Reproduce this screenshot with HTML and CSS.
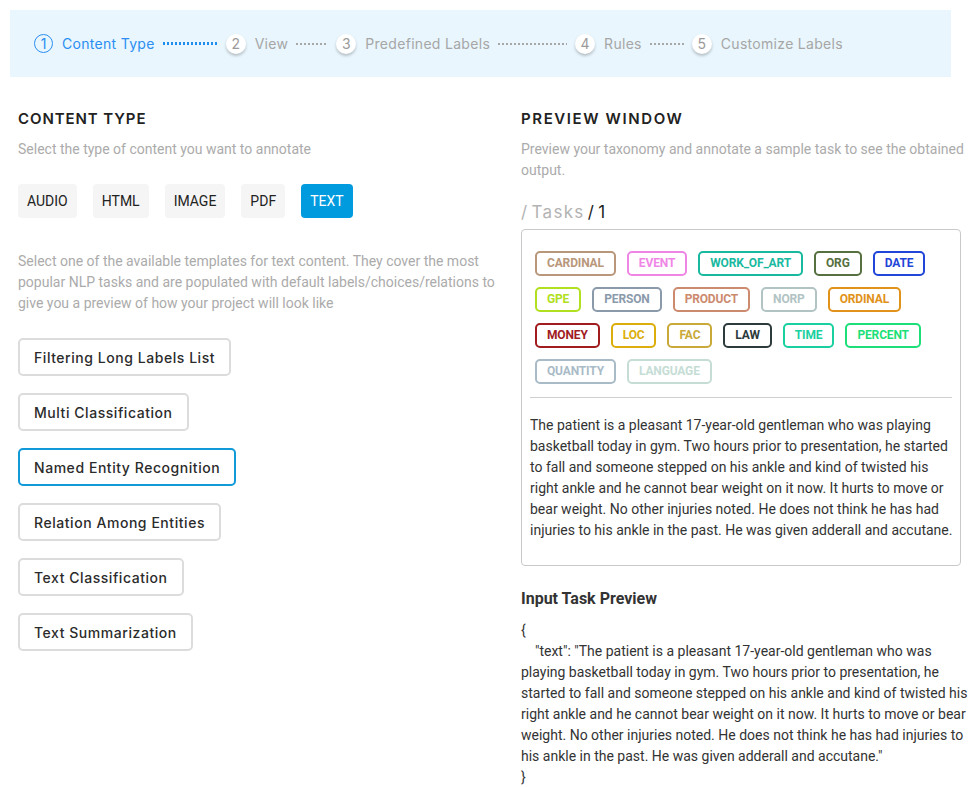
FILE: index.html
```html
<!DOCTYPE html>
<html lang="en">
<head>
<meta charset="utf-8">
<title>Project setup</title>
<link rel="stylesheet" href="styles.css">
</head>
<body>
<nav class="stepper">
  <div class="step active"><span class="num">1</span><span class="label">Content Type</span></div>
  <span class="dots dots-active w55"></span>
  <div class="step"><span class="num">2</span><span class="label">View</span></div>
  <span class="dots w32"></span>
  <div class="step"><span class="num">3</span><span class="label">Predefined Labels</span></div>
  <span class="dots w69"></span>
  <div class="step"><span class="num">4</span><span class="label">Rules</span></div>
  <span class="dots w34"></span>
  <div class="step"><span class="num">5</span><span class="label">Customize Labels</span></div>
</nav>

<main class="main">
  <section class="col-left">
    <h2 class="title">CONTENT TYPE</h2>
    <p class="sub">Select the type of content you want to annotate</p>
    <div class="types">
      <button class="type">AUDIO</button>
      <button class="type">HTML</button>
      <button class="type">IMAGE</button>
      <button class="type">PDF</button>
      <button class="type selected">TEXT</button>
    </div>
    <p class="sub desc">Select one of the available templates for text content. They cover the most popular NLP tasks and are populated with default labels/choices/relations to give you a preview of how your project will look like</p>
    <div class="templates">
      <button class="tpl">Filtering Long Labels List</button>
      <button class="tpl">Multi Classification</button>
      <button class="tpl selected">Named Entity Recognition</button>
      <button class="tpl">Relation Among Entities</button>
      <button class="tpl">Text Classification</button>
      <button class="tpl">Text Summarization</button>
    </div>
  </section>

  <section class="col-right">
    <h2 class="title wide">PREVIEW WINDOW</h2>
    <p class="sub">Preview your taxonomy and annotate a sample task to see the obtained output.</p>
    <div class="crumbs"><span class="muted">/ Tasks</span> <span class="cur">/ 1</span></div>
    <div class="preview">
      <div class="labels">
        <span class="tag c-cardinal">CARDINAL</span>
        <span class="tag c-event">EVENT</span>
        <span class="tag c-work">WORK_OF_ART</span>
        <span class="tag c-org">ORG</span>
        <span class="tag c-date">DATE</span>
        <span class="tag c-gpe">GPE</span>
        <span class="tag c-person">PERSON</span>
        <span class="tag c-product">PRODUCT</span>
        <span class="tag c-norp">NORP</span>
        <span class="tag c-ordinal">ORDINAL</span>
        <span class="tag c-money">MONEY</span>
        <span class="tag c-loc">LOC</span>
        <span class="tag c-fac">FAC</span>
        <span class="tag c-law">LAW</span>
        <span class="tag c-time">TIME</span>
        <span class="tag c-percent">PERCENT</span>
        <span class="tag c-quantity">QUANTITY</span>
        <span class="tag c-language">LANGUAGE</span>
      </div>
      <hr class="divider">
      <p class="sample">The patient is a pleasant 17-year-old gentleman who was playing basketball today in gym. Two hours prior to presentation, he started to fall and someone stepped on his ankle and kind of twisted his right ankle and he cannot bear weight on it now. It hurts to move or bear weight. No other injuries noted. He does not think he has had injuries to his ankle in the past. He was given adderall and accutane.</p>
    </div>
    <h3 class="input-title">Input Task Preview</h3>
    <div class="json">{
    "text": "The patient is a pleasant 17-year-old gentleman who was playing basketball today in gym. Two hours prior to presentation, he started to fall and someone stepped on his ankle and kind of twisted his right ankle and he cannot bear weight on it now. It hurts to move or bear weight. No other injuries noted. He does not think he has had injuries to his ankle in the past. He was given adderall and accutane."
}</div>
  </section>
</main>
</body>
</html>
```

FILE: styles.css
```css
* { box-sizing: border-box; }

body {
  margin: 0;
  padding: 10px 0 0 10px;
  background: #fff;
  font-family: Roboto, "Liberation Sans", sans-serif;
  color: #333;
}

/* ---------- stepper ---------- */
.stepper {
  width: 941px;
  height: 67px;
  background: #e9f6fd;
  display: flex;
  align-items: center;
  padding: 0 0 0 24px;
  font-family: Inter, "DejaVu Sans", sans-serif;
  font-size: 14px;
  letter-spacing: 0.3px;
}
.step {
  display: flex;
  align-items: center;
  gap: 9px;
  color: #a6a6a6;
}
.step .num {
  width: 20px;
  height: 20px;
  border-radius: 50%;
  background: #fff;
  box-shadow: 0 2px 3px rgba(0, 0, 0, 0.22);
  display: flex;
  align-items: center;
  justify-content: center;
  font-size: 14px;
  color: #9a9a9a;
  letter-spacing: 0;
}
.step.active { color: #2a8ef2; }
.step.active .num {
  width: 19px;
  height: 19px;
  background: transparent;
  box-shadow: none;
  border: 1.5px solid #2a8ef2;
  color: #2a8ef2;
  font-weight: 400;
}
.dots {
  height: 2px;
  margin: 0 8px;
  background: repeating-linear-gradient(to right, #a8a8a8 0 2px, transparent 2px 4px);
}
.dots-active {
  background: repeating-linear-gradient(to right, #1f8ef0 0 2px, transparent 2px 4px);
  height: 3px;
}
.w55 { width: 55px; }
.w32 { width: 32px; }
.w69 { width: 69px; }
.w34 { width: 34px; }

/* ---------- main layout ---------- */
.main {
  display: grid;
  grid-template-columns: 485px 447px;
  column-gap: 18px;
  padding: 32px 0 0 8px;
}

.title {
  margin: 0;
  font-family: Inter, "DejaVu Sans", sans-serif;
  font-size: 15px;
  font-weight: 600;
  line-height: 20px;
  letter-spacing: 0.9px;
  color: #222;
}
.title.wide { letter-spacing: 1.6px; }
.sub {
  margin: 10px 0 0;
  font-size: 14px;
  line-height: 21px;
  color: #ababab;
}

/* content types */
.types {
  display: flex;
  gap: 16px;
  margin-top: 24px;
}
.type {
  height: 34px;
  padding: 0 9px;
  border: none;
  border-radius: 4px;
  background: #f5f5f5;
  font-family: Roboto, "Liberation Sans", sans-serif;
  font-size: 14px;
  color: #222;
}
.type.selected {
  background: #009bdf;
  color: #fff;
}
.desc { margin-top: 33px; }

/* templates */
.templates {
  display: flex;
  flex-direction: column;
  align-items: flex-start;
  gap: 17px;
  margin-top: 24px;
}
.tpl {
  height: 38px;
  padding: 0 14px;
  border: 2px solid #dcdcdc;
  border-radius: 5px;
  background: #fff;
  font-family: Inter, "DejaVu Sans", sans-serif;
  font-size: 14px;
  font-weight: 500;
  letter-spacing: 0.55px;
  color: #2b2b2b;
}
.tpl.selected { border-color: #109ad8; }

/* preview */
.crumbs {
  margin-top: 20px;
  height: 22px;
  font-family: Inter, "DejaVu Sans", sans-serif;
  font-size: 17px;
  line-height: 22px;
  letter-spacing: 1.3px;
  word-spacing: -3px;
}
.crumbs .muted { color: #b3b3b3; }
.crumbs .cur { color: #222; }

.preview {
  margin-top: 6px;
  width: 440px;
  border: 1px solid #c9c9c9;
  border-radius: 4px;
}
.labels {
  display: flex;
  flex-wrap: wrap;
  gap: 11px;
  padding: 21px 13px 13px;
}
.tag {
  height: 25px;
  padding: 0 10px;
  border: 2px solid currentColor;
  border-radius: 5px;
  font-size: 12px;
  font-weight: 700;
  line-height: 21px;
  letter-spacing: -0.15px;
}
.c-cardinal { color: #b8977a; }
.c-event { color: #ef86e6; }
.c-work { color: #19b9a0; }
.c-org { color: #567040; }
.c-date { color: #1f45d9; }
.c-gpe { color: #b0e020; }
.c-person { color: #8a9aab; }
.c-product { color: #cc8a6e; }
.c-norp { color: #b1c3c3; }
.c-ordinal { color: #e1921a; }
.c-money { color: #a01c1f; }
.c-loc { color: #dcae0c; }
.c-fac { color: #c8a93a; }
.c-law { color: #2d3b3d; }
.c-time { color: #1bd0a0; }
.c-percent { color: #1ddf7a; }
.c-quantity { color: #a9bbc7; }
.c-language { color: #c6ddd6; }

.divider {
  margin: 0 8px;
  border: none;
  border-top: 1px solid #cfcfcf;
  height: 0;
}
.sample {
  margin: 0;
  padding: 17px 2px 24px 8px;
  font-size: 14px;
  line-height: 21px;
  color: #333;
}

.input-title {
  margin: 22px 0 0;
  font-size: 16px;
  font-weight: 700;
  line-height: 22px;
  color: #333;
}
.json {
  margin-top: 10px;
  white-space: pre-wrap;
  font-size: 14px;
  line-height: 21px;
  color: #333;
}
```
